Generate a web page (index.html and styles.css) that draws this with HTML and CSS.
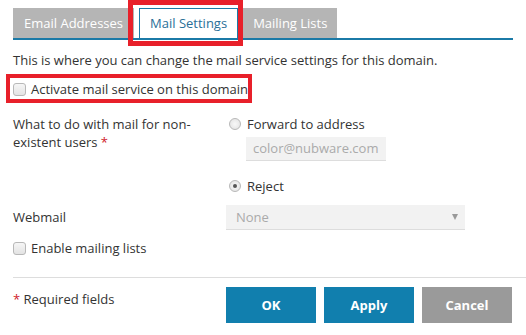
FILE: index.html
```html
<!DOCTYPE html>
<html>
<head>
<meta charset="utf-8">
<link rel="stylesheet" href="styles.css">
</head>
<body>
<div class="page">
  <div class="tabs">
    <div class="tab">Email Addresses</div>
    <div class="tab active">Mail Settings</div>
    <div class="tab">Mailing Lists</div>
    <div class="mark mark-tab"></div>
  </div>
  <p class="intro">This is where you can change the mail service settings for this domain.</p>
  <div class="check-row activate">
    <span class="checkbox"></span><span>Activate mail service on this domain</span>
    <div class="mark mark-activate"></div>
  </div>
  <div class="form-grid">
    <div class="label">What to do with mail for non-existent users <span class="req">*</span></div>
    <div class="control">
      <div class="radio-row"><span class="radio"></span><span>Forward to address</span></div>
      <div class="input">color@nubware.com</div>
      <div class="radio-row reject"><span class="radio checked"></span><span>Reject</span></div>
    </div>
    <div class="label webmail">Webmail</div>
    <div class="control">
      <div class="select"><span>None</span><span class="arrow"></span></div>
    </div>
  </div>
  <div class="check-row lists">
    <span class="checkbox"></span><span>Enable mailing lists</span>
  </div>
  <div class="footer">
    <div class="required"><span class="req">*</span> Required fields</div>
    <div class="buttons">
      <button class="btn primary">OK</button>
      <button class="btn primary">Apply</button>
      <button class="btn secondary">Cancel</button>
    </div>
  </div>
</div>
</body>
</html>
```
FILE: styles.css
```css
* { box-sizing: border-box; }
html, body { margin: 0; padding: 0; background: #fff; }
body {
  font-family: "Open Sans", "Liberation Sans", sans-serif;
  font-size: 13px;
  color: #333;
}
.page { padding: 0 0 0 13px; width: 526px; }
.tabs {
  position: relative;
  display: flex;
  gap: 5px;
  padding-top: 8px;
  border-bottom: 2px solid #1b7aa7;
  width: 500px;
}
.tab {
  height: 30px;
  line-height: 30px;
  padding: 0 11px;
  background: #b5b5b5;
  color: #fff;
  font-size: 13px;
}
.tab + .tab + .tab { padding: 0 10px; }
.tab.active {
  background: #fff;
  color: #2a6f98;
  border: 1px solid #1b7aa7;
  border-bottom: none;
  line-height: 29px;
  padding: 0 10px;
}
.mark {
  position: absolute;
  border: 5px solid #e8202a;
}
.mark-tab { left: 115px; top: 0; width: 115px; height: 46px; }
.intro { margin: 11px 0 0; line-height: 18px; }
.check-row { display: flex; align-items: center; gap: 5px; height: 28px; position: relative; }
.activate { margin-top: 6px; }
.mark-activate { left: -7px; top: -1px; width: 246px; height: 29px; border-width: 4px; }
.checkbox {
  width: 13px; height: 13px;
  border: 1px solid #b8b8b8;
  border-radius: 3px;
  background: linear-gradient(#f6f6f6, #e3e3e3);
}
.form-grid {
  display: grid;
  grid-template-columns: 213px 240px;
  margin-top: 12px;
}
.label { line-height: 18px; padding-right: 30px; }
.req { color: #d0202a; }
.radio-row { display: flex; align-items: center; gap: 6px; height: 18px; padding-left: 3px; }
.radio {
  width: 12px; height: 12px;
  border: 1px solid #b8b8b8;
  border-radius: 50%;
  background: radial-gradient(#f8f8f8, #e0e0e0);
  position: relative;
}
.radio.checked::after {
  content: "";
  position: absolute;
  left: 3px; top: 3px;
  width: 4px; height: 4px;
  border-radius: 50%;
  background: #555;
}
.input {
  margin: 4px 0 0 20px;
  width: 140px; height: 24px;
  background: #f2f2f2;
  border-bottom: 1px solid #ddd;
  color: #aaa;
  padding-left: 7px;
  line-height: 23px;
}
.reject { margin-top: 16px; }
.webmail { margin-top: 13px; }
.select {
  margin-top: 10px;
  width: 239px; height: 25px;
  background: #f2f2f2;
  border-bottom: 1px solid #ddd;
  color: #aaa;
  padding: 0 7px 0 10px;
  display: flex; align-items: center; justify-content: space-between;
}
.arrow {
  width: 0; height: 0;
  border-left: 3px solid transparent;
  border-right: 3px solid transparent;
  border-top: 6px solid #999;
}
.lists { margin-top: 4px; }
.footer {
  margin-top: 15px;
  border-top: 1px solid #ddd;
  display: grid;
  grid-template-columns: 213px auto;
  padding-top: 9px;
}
.required { padding-top: 2px; line-height: 20px; }
.buttons { display: flex; gap: 8px; }
.btn {
  width: 90px; height: 36px;
  border: none;
  font-family: "Open Sans", "Liberation Sans", sans-serif;
  font-weight: bold;
  font-size: 13px;
  color: #fff;
}
.btn.primary { background: #117fae; }
.btn.secondary { background: #9a9a9a; }
```
